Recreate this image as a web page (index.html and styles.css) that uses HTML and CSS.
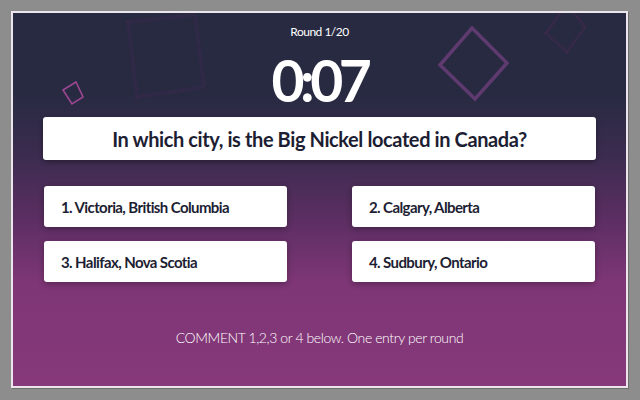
FILE: index.html
```html
<!DOCTYPE html>
<html lang="en">
<head>
    <meta charset="UTF-8">
    <meta name="viewport" content="width=device-width, initial-scale=1.0">
    <title>Trivia Round</title>
    <link rel="stylesheet" href="styles.css">
</head>
<body>
    <div class="frame">
        <svg class="decor" width="613" height="373" viewBox="13 13 613 373">
            <polygon points="128,22 195,15 204,87 137,97" fill="none" stroke="#36294b" stroke-width="4" stroke-dasharray="1.5 1"/>
            <polygon points="76,82 83,97 72,104 63,90" fill="none" stroke="#9c4791" stroke-width="1.6"/>
            <polygon points="472,28 507,63 475,99 440,65" fill="none" stroke="#5e3a6f" stroke-width="3.5"/>
            <polygon points="567,4 585,27 567,52 546,33" fill="none" stroke="#3e2a4c" stroke-width="3" stroke-dasharray="1.5 1"/>
        </svg>

        <div class="content">
            <div class="round">Round 1/20</div>
            <div class="timer">0:07</div>

            <div class="question">In which city, is the Big Nickel located in Canada?</div>

            <div class="answers">
                <div class="answer">1. Victoria, British Columbia</div>
                <div class="answer">2. Calgary, Alberta</div>
                <div class="answer">3. Halifax, Nova Scotia</div>
                <div class="answer">4. Sudbury, Ontario</div>
            </div>

            <div class="comment">COMMENT 1,2,3 or 4 below. One entry per round</div>
        </div>
    </div>
</body>
</html>
```

FILE: styles.css
```css
body {
    margin: 0;
    background-color: #8d8d8d;
    font-family: Lato, "Open Sans", sans-serif;
}
.frame {
    position: relative;
    margin: 11px;
    width: 613px;
    height: 373px;
    border: 2px solid #ece6ec;
    box-shadow: 1px 1px 0 #6e6e6e;
    background: linear-gradient(180deg, #272a41 0%, #282a42 22%, #3b2c4f 38%, #5b2e62 55%, #7e3676 72%, #86387a 100%);
    overflow: hidden;
}
.decor {
    position: absolute;
    left: 0;
    top: 0;
}
.content {
    position: relative;
    padding: 11px 30px 0 30px;
    color: #ffffff;
}
.round {
    text-align: center;
    font-size: 12px;
    line-height: 15px;
    letter-spacing: -0.5px;
}
.timer {
    margin-top: 12px;
    text-align: center;
    font-size: 57px;
    font-weight: 700;
    line-height: 58px;
    letter-spacing: -4.5px;
}
.question {
    margin-top: 8px;
    height: 43px;
    display: flex;
    align-items: center;
    justify-content: center;
    background-color: #ffffff;
    border-radius: 3px;
    box-shadow: 0 2px 5px rgba(0, 0, 0, 0.35);
    color: #1d1e33;
    font-size: 20px;
    font-weight: 700;
    letter-spacing: -0.4px;
}
.answers {
    margin: 26px 1px 0 1px;
    display: grid;
    grid-template-columns: 243px 243px;
    justify-content: space-between;
    row-gap: 14px;
}
.answer {
    height: 41px;
    display: flex;
    align-items: center;
    padding-left: 17px;
    background-color: #ffffff;
    border-radius: 3px;
    box-shadow: 0 2px 6px rgba(0, 0, 0, 0.3);
    color: #1d1e33;
    font-size: 15px;
    font-weight: 700;
    letter-spacing: -0.6px;
}
.comment {
    margin-top: 47px;
    text-align: center;
    font-size: 14px;
    font-weight: 300;
    line-height: 17px;
    letter-spacing: -0.4px;
    color: #ffffff;
}
```
